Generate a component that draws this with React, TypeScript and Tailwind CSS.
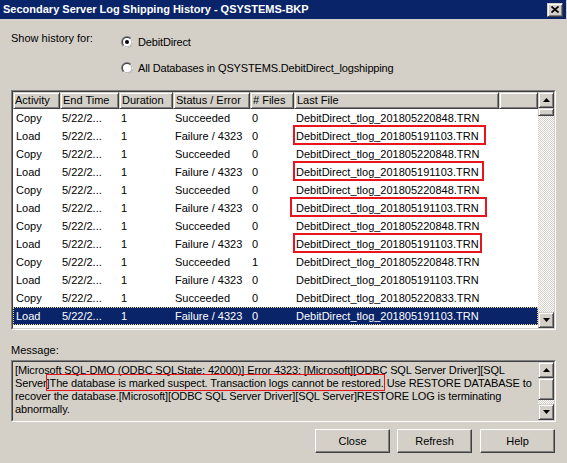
import React from 'react';

type Row = { act: string; status: string; files: string; file: string; box?: string };

const OK = 'DebitDirect_tlog_201805220848.TRN';
const BAD = 'DebitDirect_tlog_201805191103.TRN';

const rows: Row[] = [
  { act: 'Copy', status: 'Succeeded', files: '0', file: OK },
  { act: 'Load', status: 'Failure / 4323', files: '0', file: BAD, box: 'left-[280px] w-[193px]' },
  { act: 'Copy', status: 'Succeeded', files: '0', file: OK },
  { act: 'Load', status: 'Failure / 4323', files: '0', file: BAD, box: 'left-[280px] w-[191px]' },
  { act: 'Copy', status: 'Succeeded', files: '0', file: OK },
  { act: 'Load', status: 'Failure / 4323', files: '0', file: BAD, box: 'left-[277px] w-[197px]' },
  { act: 'Copy', status: 'Succeeded', files: '0', file: OK },
  { act: 'Load', status: 'Failure / 4323', files: '0', file: BAD, box: 'left-[280px] w-[189px]' },
  { act: 'Copy', status: 'Succeeded', files: '1', file: OK },
  { act: 'Load', status: 'Failure / 4323', files: '0', file: BAD },
  { act: 'Copy', status: 'Succeeded', files: '0', file: 'DebitDirect_tlog_201805220833.TRN' },
  { act: 'Load', status: 'Failure / 4323', files: '0', file: BAD },
];

const cols = 'grid grid-cols-[47px_59px_54px_77px_44px_205px_39px]';
const bevel =
  'border border-t-[#d4d0c8] border-l-[#d4d0c8] border-r-[#404040] border-b-[#404040] shadow-[inset_1px_1px_#ffffff,inset_-1px_-1px_#808080] bg-[#d4d0c8]';
const checker =
  'bg-[image:repeating-conic-gradient(#ffffff_0%_25%,#d4d0c8_0%_50%)] bg-[length:2px_2px]';

const Arrow = ({ up }: { up?: boolean }) => (
  <svg width="7" height="4" viewBox="0 0 7 4">
    {up ? <polygon points="3.5,0 7,4 0,4" fill="#000" /> : <polygon points="0,0 7,0 3.5,4" fill="#000" />}
  </svg>
);

const ScrollBtn = ({ up }: { up?: boolean }) => (
  <div className={`h-[16px] flex items-center justify-center ${bevel}`}>
    <Arrow up={up} />
  </div>
);

const Radio = ({ on }: { on?: boolean }) => (
  <svg width="12" height="12" viewBox="0 0 12 12">
    <circle cx="6" cy="6" r="6" fill="#808080" />
    <path d="M10.24 1.76 A6 6 0 0 1 1.76 10.24 Z" fill="#ffffff" />
    <circle cx="6" cy="6" r="5" fill="#404040" />
    <path d="M9.54 2.46 A5 5 0 0 1 2.46 9.54 Z" fill="#d4d0c8" />
    <circle cx="6" cy="6" r="4" fill="#ffffff" />
    {on && <circle cx="6" cy="6" r="2" fill="#000000" />}
  </svg>
);

const Sunken = ({ className, children }: { className?: string; children: React.ReactNode }) => (
  <div className={`border border-t-[#808080] border-l-[#808080] border-r-white border-b-white ${className ?? ''}`}>
    <div className="h-full border border-t-[#404040] border-l-[#404040] border-r-[#d4d0c8] border-b-[#d4d0c8] flex">
      {children}
    </div>
  </div>
);

const Btn = ({ label, className }: { label: string; className?: string }) => (
  <button
    className={`w-[75px] h-[24px] bg-[#d4d0c8] border border-t-white border-l-white border-r-[#404040] border-b-[#404040] shadow-[inset_-1px_-1px_#808080] text-[11px] ${className ?? ''}`}
  >
    {label}
  </button>
);

export default function App() {
  return (
    <div className="w-[567px] h-[463px] overflow-hidden bg-[#d4d0c8] text-black font-['Liberation_Sans',Arial,sans-serif] text-[11px]">
      {/* title bar */}
      <div className="w-[566px] h-[19px] bg-[#0a246a] flex items-center justify-between pl-[3px] pr-[3px]">
        <span className="text-white font-bold text-[11px] leading-[19px] whitespace-nowrap">
          Secondary Server Log Shipping History - QSYSTEMS-BKP
        </span>
        <div className={`w-[16px] h-[14px] flex items-center justify-center ${bevel}`}>
          <svg width="8" height="7" viewBox="0 0 8 7">
            <path d="M0.5 0.5 L7.5 6.5 M7.5 0.5 L0.5 6.5" stroke="#000" strokeWidth="1.7" />
          </svg>
        </div>
      </div>

      {/* show history for */}
      <div className="flex mt-[13px]">
        <div className="w-[121px] pl-[11px] leading-[13px]">Show history for:</div>
        <div className="flex flex-col gap-[10px] mt-[2px] tracking-[-0.15px]">
          <div className="h-[16px] flex items-center gap-[5px]">
            <Radio on />
            <span>DebitDirect</span>
          </div>
          <div className="h-[16px] flex items-center gap-[5px]">
            <Radio />
            <span>All Databases in QSYSTEMS.DebitDirect_logshipping</span>
          </div>
        </div>
      </div>

      {/* history list */}
      <Sunken className="ml-[11px] mt-[14px] w-[545px] h-[240px]">
        <div className="flex-1 bg-white flex flex-col">
          <div className={cols}>
            {['Activity', 'End Time', 'Duration', 'Status / Error', '# Files', 'Last File', ''].map((h, i) => (
              <div
                key={i}
                className={`h-[17px] leading-[15px] whitespace-nowrap ${i === 0 ? 'pl-[1px]' : 'pl-[2px]'} ${bevel}`}
              >
                {h}
              </div>
            ))}
          </div>
          {rows.map((r, i) => {
            const sel = i === rows.length - 1;
            return (
              <div
                key={i}
                className={`relative h-[18px] items-center whitespace-nowrap ${cols} ${
                  sel ? 'bg-[#0a246a] text-white outline-1 outline-dotted outline-[#e8cf86] -outline-offset-1' : ''
                }`}
              >
                <div className="pl-[3px]">{r.act}</div>
                <div className="pl-[2px]">5/22/2...</div>
                <div className="pl-[2px]">1</div>
                <div className="pl-[2px]">{r.status}</div>
                <div className="pl-[2px]">{r.files}</div>
                <div className="pl-[2px]">{r.file}</div>
                <div />
                {r.box && (
                  <div className={`absolute top-[-2px] h-[20px] border-2 border-[#e8141e] ${r.box}`} />
                )}
              </div>
            );
          })}
        </div>
        <div className="w-[16px] flex flex-col">
          <ScrollBtn up />
          <div className={`h-[8px] ${bevel}`} />
          <div className={`flex-1 ${checker}`} />
          <ScrollBtn />
        </div>
      </Sunken>

      {/* message */}
      <div className="pl-[11px] mt-[14px] leading-[13px]">Message:</div>
      <Sunken className="ml-[11px] mt-[3px] w-[545px] h-[62px]">
        <div className="flex-1 pl-[2px] pt-[2px] leading-[13px] whitespace-nowrap tracking-[-0.13px]">
          <div>[Microsoft SQL-DMO (ODBC SQLState: 42000)] Error 4323: [Microsoft][ODBC SQL Server Driver][SQL</div>
          <div>
            Server]
            <span className="relative">
              The database is marked suspect. Transaction logs cannot be restored.
              <span className="absolute left-[-4px] right-[-1px] top-[-3px] bottom-[-2px] border border-[#e8141e]" />
            </span>{' '}
            Use RESTORE DATABASE to
          </div>
          <div>recover the database.[Microsoft][ODBC SQL Server Driver][SQL Server]RESTORE LOG is terminating</div>
          <div>abnormally.</div>
        </div>
        <div className="w-[16px] flex flex-col">
          <ScrollBtn up />
          <div className={`h-[22px] ${bevel}`} />
          <div className={`flex-1 ${checker}`} />
          <ScrollBtn />
        </div>
      </Sunken>

      {/* buttons */}
      <div className="flex justify-end pr-[12px] mt-[7px]">
        <Btn label="Close" />
        <Btn label="Refresh" className="ml-[7px]" />
        <Btn label="Help" className="ml-[8px]" />
      </div>
    </div>
  );
}
